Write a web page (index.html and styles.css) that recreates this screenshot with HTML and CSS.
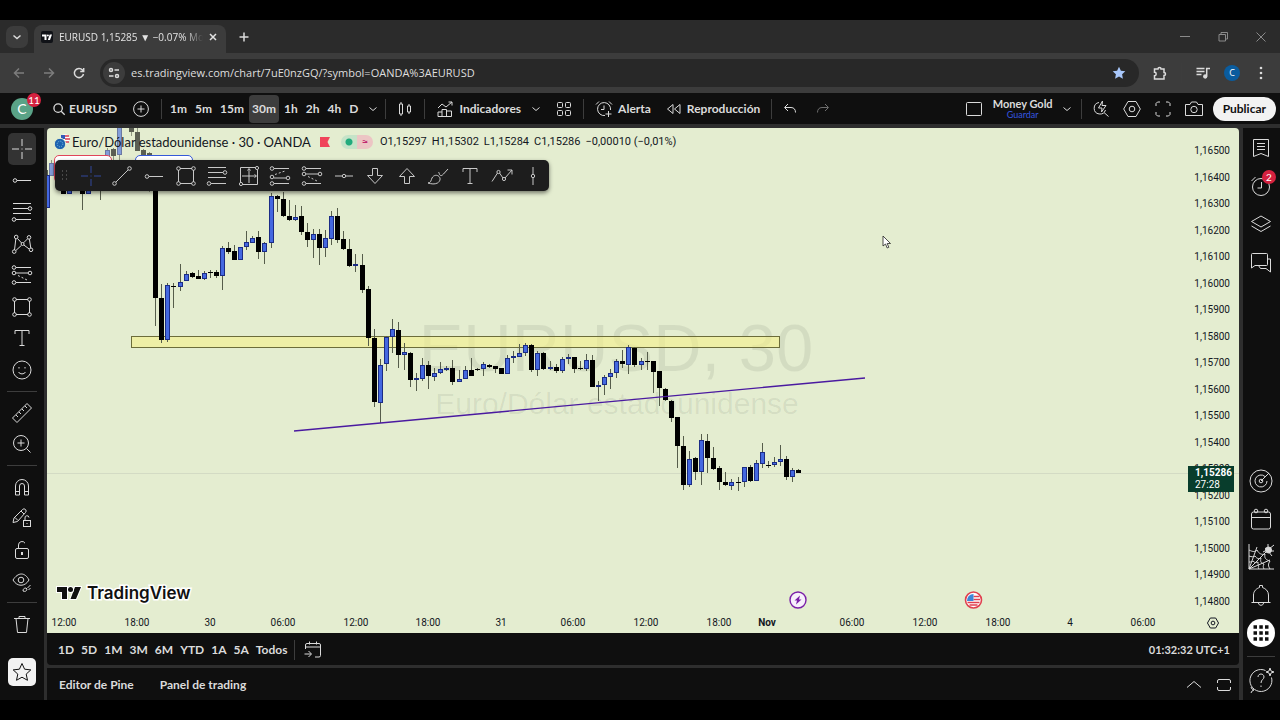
FILE: index.html
```html
<!DOCTYPE html>
<html lang="es">
<head>
  <meta charset="UTF-8">
  <meta name="viewport" content="width=device-width, initial-scale=1.0">
  <title>EURUSD 1,15285 ▼ −0.07% Money Gold</title>
  <link rel="stylesheet" href="styles.css">
</head>
<body>

<svg class="sprite" aria-hidden="true">
  <symbol id="i-cross" viewBox="0 0 24 24"><path d="M12 2v7M12 15v7M2 12h7M15 12h7M11.5 12h1"/></symbol>
  <symbol id="i-trend" viewBox="0 0 24 24"><circle cx="4.5" cy="19.5" r="1.8"/><circle cx="19.5" cy="4.5" r="1.8"/><path d="M5.8 18.2 18.2 5.8"/></symbol>
  <symbol id="i-ray" viewBox="0 0 24 24"><circle cx="5" cy="12.5" r="1.8"/><path d="M7 12.5h14"/></symbol>
  <symbol id="i-fib" viewBox="0 0 24 24"><path d="M3 3.5h18M3 8.5h15M3 13.5h18M6 19.5h15"/><circle cx="20" cy="8.5" r="1.8"/><circle cx="4" cy="19.5" r="1.8"/></symbol>
  <symbol id="i-pattern" viewBox="0 0 24 24"><path d="m4.5 18 1.3-11M7.6 6.6l4 4.4M13.6 10.8l4-4M19.4 7.2l1.4 9M6 18.4l5.4-5M13.8 13l5.4 4"/><circle cx="4.2" cy="19.6" r="1.8"/><circle cx="6.2" cy="5" r="1.8"/><circle cx="12.6" cy="12" r="1.5"/><circle cx="19" cy="5.4" r="1.8"/><circle cx="21" cy="17.8" r="1.8"/></symbol>
  <symbol id="i-forecast" viewBox="0 0 24 24"><path d="M6 4.5h15M6 19.5h15M6 14h12"/><path d="M7 10.5l10-3.5" stroke-dasharray="2 2"/><circle cx="4" cy="4.5" r="1.8"/><circle cx="4" cy="13" r="1.8"/><circle cx="4" cy="19.5" r="1.8"/><circle cx="20" cy="14" r="1.8"/></symbol>
  <symbol id="i-position" viewBox="0 0 24 24"><path d="M6 4.5h15M6 10h12M6 19.5h15"/><path d="M8 12.5l10 5" stroke-dasharray="2 2"/><circle cx="4" cy="4.5" r="1.8"/><circle cx="4" cy="10" r="1.8"/><circle cx="4" cy="19.5" r="1.8"/><circle cx="20" cy="10" r="1.8"/></symbol>
  <symbol id="i-rect" viewBox="0 0 24 24"><path d="M6 4.5h12M6 19.5h12M4.5 6v12M19.5 6v12"/><circle cx="4.5" cy="4.5" r="1.8"/><circle cx="19.5" cy="4.5" r="1.8"/><circle cx="4.5" cy="19.5" r="1.8"/><circle cx="19.5" cy="19.5" r="1.8"/></symbol>
  <symbol id="i-range" viewBox="0 0 24 24"><path d="M18 3.500H3.500v15M5.500 20.500h15V6M12 5v14M5 12h14M10.500 6.500l1.500-2 1.500 2M17.500 10.500l2 1.500-2 1.500"/><circle cx="20" cy="4" r="1.600"/><circle cx="4" cy="20" r="1.600"/></symbol>
  <symbol id="i-text" viewBox="0 0 24 24"><path d="M5 8V4.500h14V8M12 4.500v15M9.500 19.500h5"/></symbol>
  <symbol id="i-smile" viewBox="0 0 24 24"><circle cx="12" cy="12" r="9"/><path d="M8.500 14c1.500 2.500 5.500 2.500 7 0M9 9v1.500M15 9v1.500"/></symbol>
  <symbol id="i-ruler" viewBox="0 0 24 24"><path d="M2.500 17 17 2.500l4.500 4.500L7 21.500zM6 14l2 2M9 11l2 2M12 8l2 2M15 5l2 2"/></symbol>
  <symbol id="i-zoom" viewBox="0 0 24 24"><circle cx="11" cy="11" r="7.500"/><path d="m16.500 16.500 4 4M11 7.500v7M7.500 11h7"/></symbol>
  <symbol id="i-magnet" viewBox="0 0 24 24"><path d="M5.500 20V11a6.500 6.500 0 0 1 13 0v9h-4v-9a2.500 2.500 0 0 0-5 0v9zM5.500 16.500h4M14.500 16.500h4"/></symbol>
  <symbol id="i-penlock" viewBox="0 0 24 24"><path d="M3 16.500 4 12l8.500-8.500a2 2 0 0 1 3 3L7.500 15.500zM11 5l3 3M5 11.500l3 3"/><rect x="13.500" y="14.500" width="7" height="6"/><path d="M15 14.500V12a2 2 0 0 1 4-.5M17 17v1"/></symbol>
  <symbol id="i-lock" viewBox="0 0 24 24"><rect x="5.500" y="10.500" width="13" height="10" rx="1.500"/><path d="M8.500 10.500V7a3.500 3.500 0 0 1 6.500-1.800"/><path d="M12 14v3" stroke-width="2"/></symbol>
  <symbol id="i-eye" viewBox="0 0 24 24"><path d="M3 10c5-8 12-8 16 0-4 7-12 7-16 0z"/><circle cx="11" cy="10" r="2.800"/><path d="M13 21c0-2 1-3 3-3l1 1c0 2-2 3-4 2zM17.500 18l3-3M18.500 19.500l2-1"/></symbol>
  <symbol id="i-trash" viewBox="0 0 24 24"><path d="M4 6.500h16M9 6V4.500h6V6M6 6.500l1.500 14h9L18 6.500"/></symbol>
  <symbol id="i-star" viewBox="0 0 24 24"><path d="m12 3.500 2.600 5.700 6.200.700-4.600 4.200 1.300 6.200-5.500-3.100-5.500 3.100 1.300-6.200-4.600-4.200 6.200-.700z"/></symbol>
  <symbol id="i-hline" viewBox="0 0 24 24"><path d="M3 12h7M14 12h7"/><circle cx="12" cy="12" r="1.700"/></symbol>
  <symbol id="i-down" viewBox="0 0 24 24"><path d="M9.500 4.500h5v7h5L12 19.500 4.500 11.500h5z"/></symbol>
  <symbol id="i-up" viewBox="0 0 24 24"><path d="M9.500 19.500h5v-7h5L12 4.500 4.500 12.500h5z"/></symbol>
  <symbol id="i-brush" viewBox="0 0 24 24"><path d="M2 19c3 0 3-3 4-5 1.500-3 5-3.500 7-1.500s1 5-1.500 6.500c-3 1.500-6 1-9.500 0zM12.500 8c1 1 .5 2.500 2 3.500 1 .5 2-.5 3-1.500L22 5"/></symbol>
  <symbol id="i-zigzag" viewBox="0 0 24 24"><path d="M2 17.500 7.500 9M9.500 9l3.500 5M15 14l7-8M17.500 6H22v4.500"/><circle cx="8.500" cy="8" r="1.600"/><circle cx="14" cy="15" r="1.600"/></symbol>
  <symbol id="i-vline" viewBox="0 0 24 24"><path d="M12 3v7M12 14v7"/><circle cx="12" cy="12" r="1.700"/></symbol>
  <symbol id="i-search" viewBox="0 0 16 16"><circle cx="7" cy="7" r="4.800"/><path d="m10.500 10.500 4 4"/></symbol>
  <symbol id="i-plus" viewBox="0 0 16 16"><circle cx="8" cy="8" r="7.400"/><path d="M8 4.500v7M4.500 8h7"/></symbol>
  <symbol id="i-chev" viewBox="0 0 8 8"><path d="m.5 2.500 3.500 3 3.500-3"/></symbol>
  <symbol id="i-candles" viewBox="0 0 16 16"><path d="M2.500 3h3v10h-3zM4 1v2M4 13v2M10.500 5h3v6h-3zM12 3v2M12 11v2"/></symbol>
  <symbol id="i-indicators" viewBox="0 0 18 18"><path d="M2 8l4-4 4 3 6-5M12.500 2H16v3.500M2 16.500V12h4v4.500M6 12V9.500h4.500v7M10.500 11h5v5.500H2"/></symbol>
  <symbol id="i-grid" viewBox="0 0 16 16"><rect x="1.500" y="1.500" width="5" height="5" rx="1"/><rect x="9.500" y="1.500" width="5" height="5" rx="1"/><rect x="1.500" y="9.500" width="5" height="5" rx="1"/><rect x="9.500" y="9.500" width="5" height="5" rx="1"/></symbol>
  <symbol id="i-alarm" viewBox="0 0 18 18"><path d="M15.500 10A6.500 6.500 0 1 0 10 15.500M9 5.500v4H6M1 4.500 4 1.500M14 1.500l3 3M13.500 11v6M10.500 14h6"/></symbol>
  <symbol id="i-rewind" viewBox="0 0 16 16"><path d="M7 3.500v9L1.500 8zM14 3.500v9L8.500 8z"/></symbol>
  <symbol id="i-undo" viewBox="0 0 14 14"><path d="M5 2 1.500 5.500 5 9M2 5.500h6c3 0 4.500 2 4.500 5"/></symbol>
  <symbol id="i-redo" viewBox="0 0 14 14"><path d="M9 2l3.500 3.500L9 9M12 5.500H6c-3 0-4.500 2-4.500 5"/></symbol>
  <symbol id="i-square" viewBox="0 0 18 18"><rect x="1.500" y="2.500" width="15" height="13" rx="1"/></symbol>
  <symbol id="i-quick" viewBox="0 0 18 18"><path d="M7 2.500A5.800 5.800 0 1 0 13.500 10M12 12.500l4.500 4M10.500 1 6.500 8h3.500l-.5 4L14 5.500h-4z"/></symbol>
  <symbol id="i-hex" viewBox="0 0 18 18"><path d="M5 1.500h8L17.300 9 13 16.500H5L.7 9z"/><circle cx="9" cy="9" r="2.800"/></symbol>
  <symbol id="i-full" viewBox="0 0 18 18"><path d="M2 6V3.500L3.500 2H6M12 2h2.500L16 3.500V6M16 12v2.500L14.500 16H12M6 16H3.500L2 14.500V12"/></symbol>
  <symbol id="i-maximize" viewBox="0 0 16 16"><path d="M1.500 6V4A1.500 1.500 0 0 1 3 2.500h10A1.500 1.500 0 0 1 14.500 4v2M14.500 10v2a1.500 1.500 0 0 1-1.500 1.500H3A1.500 1.500 0 0 1 1.500 12v-2"/></symbol>
  <symbol id="i-camera" viewBox="0 0 18 18"><path d="M.5 4.500H5l1.500-2.500h5L13 4.500h4.500v11H.5z"/><circle cx="9" cy="9.500" r="3.200"/></symbol>
  <symbol id="i-list" viewBox="0 0 24 24"><path d="M4.500 3.500h15v17L12 17.500l-7.500 3zM8 7.500h8M8 10.500h8M8 13.500h8"/></symbol>
  <symbol id="i-clock" viewBox="0 0 24 24"><circle cx="12" cy="13" r="8.500"/><path d="M12.500 8v6H8.500M2.500 7l4-4"/></symbol>
  <symbol id="i-layers" viewBox="0 0 24 24"><path d="m12 4 9.500 5.500L12 15 2.500 9.500zM2.500 14l9.500 5.500 9.500-5.500"/></symbol>
  <symbol id="i-chat" viewBox="0 0 24 24"><path d="M3.500 3.500h14a1 1 0 0 1 1 1v10a1 1 0 0 1-1 1H6L2.500 18V4.500a1 1 0 0 1 1-1zM18.500 9h3v13L17 18.500h-5.500l-2-3"/></symbol>
  <symbol id="i-radar" viewBox="0 0 24 24"><circle cx="12" cy="12" r="11"/><path d="M16 7.500A6 6 0 1 0 18 12M12 12l8-8"/><circle cx="12" cy="12" r="1.800"/></symbol>
  <symbol id="i-cal" viewBox="0 0 24 24"><rect x="2.500" y="5" width="19" height="17" rx="2"/><path d="M2.500 10.500h19"/><circle cx="7" cy="4" r="1.800"/><circle cx="17" cy="4" r="1.800"/></symbol>
  <symbol id="i-web" viewBox="0 0 26 26"><path d="M1 0v25h25M1 25 20 6M1 25 9 3M1 25l21-9M1 6c4 2 6 2 8 0 2 4 5 5 8 4-1 4 1 6 5 7-2 3-2 5 0 8M1 12c3 1 4 1 6 0 2 3 4 3 6 2-1 4 0 5 3 6-1 2-1 3 0 5M1 18c2 0 3 0 4-1 2 2 3 2 5 1 0 2 0 3 1 4-1 1-1 2 0 3"/><path d="M17 4l3 2M20 0v5M26 1l-5 4M27 7h-6M24 12l-4-5M15 8l4-2"/><circle cx="20.500" cy="6" r="3" fill="currentColor"/></symbol>
  <symbol id="i-bell" viewBox="0 0 24 24"><path d="M2.500 19.500h19M4.500 19.500V12c0-4 3-6.500 6-7.500v-2h3v2c3 1 6 3.500 6 7.500v7.500M9.500 20c0 3 5 3 5 0"/></symbol>
  <symbol id="i-help" viewBox="0 0 26 26"><path d="M23.500 10.500A11 11 0 1 1 17.500 3.500M10 10c0-4 6-4 6 0 0 2.500-3 2.500-3 6M13 18.500v1.500M22 1l1 3 3 1-3 1-1 3-1-3-3-1 3-1zM3 20l1 2 2 1-2 1-1 2"/></symbol>
  <symbol id="i-goto" viewBox="0 0 18 18"><path d="M1.500 8V4a1.500 1.500 0 0 1 1.500-1.500h12A1.500 1.500 0 0 1 16.500 4v10.500A1.500 1.500 0 0 1 15 16h-4M1.500 6h15M5.500.500v3M12.500.500v3M.500 13H7M4.500 10l3 3-3 3"/></symbol>
  <symbol id="i-collapse" viewBox="0 0 16 16"><path d="m1 10.500 7-6 7 6"/></symbol>
</svg>

<div class="browser">
  <header class="chrome">
    <div class="tabs">
      <button class="tab-search" aria-label="Buscar pestañas"><svg class="ico s8 bold"><use href="#i-chev"/></svg></button>
      <div class="tab">
        <svg class="favicon" viewBox="0 0 12 12"><rect width="12" height="12" rx="2" fill="#101217"/><path d="M1 3.500h4.500V9H3.500V5.500H1zM8.700 3.500H11L9 9H6.800z" fill="#fff"/><circle cx="6.900" cy="4.500" r="1" fill="#fff"/></svg>
        <span class="tab-title">EURUSD 1,15285 ▼ −0.07% Mo</span>
        <button class="tab-close" aria-label="Cerrar pestaña"><svg class="ico s8 bold" viewBox="0 0 8 8"><path d="m1 1 6 6M7 1 1 7"/></svg></button>
      </div>
      <button class="tab-new" aria-label="Nueva pestaña"><svg class="ico s10 bold" viewBox="0 0 10 10"><path d="M5 .5v9M.5 5h9"/></svg></button>
      <div class="window-buttons">
        <button aria-label="Minimizar"><svg class="ico s10" viewBox="0 0 10 10"><path d="M0 4.500h10"/></svg></button>
        <button aria-label="Restaurar"><svg class="ico s10" viewBox="0 0 10 10"><path d="M1 2.500h6.500V9H1zM3 2.500v-2h6.500V7h-2"/></svg></button>
        <button aria-label="Cerrar"><svg class="ico s10" viewBox="0 0 10 10"><path d="m.5.5 9 9M9.500.500l-9 9"/></svg></button>
      </div>
    </div>
    <div class="address">
      <button class="nav dim" aria-label="Atrás"><svg class="ico s12 bold" viewBox="0 0 12 12"><path d="M11 6H1.500M6 1.500 1.500 6 6 10.500"/></svg></button>
      <button class="nav dim" aria-label="Adelante"><svg class="ico s12 bold" viewBox="0 0 12 12"><path d="M1 6h9.500M6 1.500 10.500 6 6 10.500"/></svg></button>
      <button class="nav" aria-label="Recargar"><svg class="ico s12 bold" viewBox="0 0 12 12"><path d="M10.500 7A4.600 4.600 0 1 1 9.500 3l1 1.200M10.700 1v3.500H7.200"/></svg></button>
      <div class="omnibox">
        <span class="site-info"><svg class="ico s12 bold" viewBox="0 0 12 12"><circle cx="3" cy="3" r="1.500"/><path d="M6.500 3H11M1 9h4.500"/><circle cx="9" cy="9" r="1.500"/></svg></span>
        <input class="url" type="text" aria-label="Dirección" value="es.tradingview.com/chart/7uE0nzGQ/?symbol=OANDA%3AEURUSD">
        <svg class="bookmark" viewBox="0 0 14 14"><path d="m7 .8 1.900 4 4.400.500-3.200 3 .8 4.400L7 10.500l-3.900 2.200.8-4.400-3.200-3 4.400-.500z"/></svg>
      </div>
      <button class="nav ext" aria-label="Extensiones"><svg class="ico s14 bold" viewBox="0 0 14 14"><path d="M1.500 3H5a1.500 1.500 0 0 1 3 0h3v3.500a1.500 1.500 0 0 1 0 3V13H1.500V9.700a1.700 1.700 0 0 0 0-3.400z"/></svg></button>
      <i class="line"></i>
      <button class="nav" aria-label="Control multimedia"><svg class="ico s14 bold" viewBox="0 0 14 14"><path d="M.500 2.500h8M.500 5.500h8M.500 8.500h5M10.700 10.500V2.500H14"/><circle cx="9.200" cy="10.500" r="1.400" fill="currentColor"/></svg></button>
      <button class="profile" aria-label="Perfil">C</button>
      <button class="nav" aria-label="Menú"><svg class="s14 dots" viewBox="0 0 14 14"><circle cx="7" cy="2" r="1.300"/><circle cx="7" cy="7" r="1.300"/><circle cx="7" cy="12" r="1.300"/></svg></button>
    </div>
  </header>

  <nav class="toolbar">
    <button class="avatar">C<span class="badge">11</span></button>
    <button class="symbol"><svg class="ico s14 bold"><use href="#i-search"/></svg>EURUSD</button>
    <button class="add" aria-label="Comparar"><svg class="ico s16"><use href="#i-plus"/></svg></button>
    <i class="line"></i>
    <div class="intervals">
      <button>1m</button><button>5m</button><button>15m</button><button class="active">30m</button><button>1h</button><button>2h</button><button>4h</button><button>D</button>
    </div>
    <button class="more" aria-label="Más intervalos"><svg class="ico s8"><use href="#i-chev"/></svg></button>
    <i class="line"></i>
    <button class="pad" aria-label="Velas"><svg class="ico s16"><use href="#i-candles"/></svg></button>
    <i class="line"></i>
    <button class="pad"><svg class="ico s18"><use href="#i-indicators"/></svg>Indicadores</button>
    <button class="more" aria-label="Favoritos"><svg class="ico s8"><use href="#i-chev"/></svg></button>
    <button class="pad templates" aria-label="Plantillas"><svg class="ico s16"><use href="#i-grid"/></svg></button>
    <i class="line"></i>
    <button class="pad"><svg class="ico s18"><use href="#i-alarm"/></svg>Alerta</button>
    <button class="pad replay"><svg class="ico s16"><use href="#i-rewind"/></svg>Reproducción</button>
    <i class="line"></i>
    <button class="pad" aria-label="Deshacer"><svg class="ico s14"><use href="#i-undo"/></svg></button>
    <button class="redo" aria-label="Rehacer"><svg class="ico s14"><use href="#i-redo"/></svg></button>

    <div class="right">
      <button aria-label="Diseño"><svg class="ico s18"><use href="#i-square"/></svg></button>
      <button class="layout-name">Money Gold<small>Guardar</small></button>
      <button aria-label="Diseños"><svg class="ico s8"><use href="#i-chev"/></svg></button>
      <i class="line"></i>
      <div class="actions">
        <button aria-label="Búsqueda rápida"><svg class="ico s18"><use href="#i-quick"/></svg></button>
        <button aria-label="Configuración"><svg class="ico s18"><use href="#i-hex"/></svg></button>
        <button aria-label="Pantalla completa"><svg class="ico s18"><use href="#i-full"/></svg></button>
        <button aria-label="Captura"><svg class="ico s18"><use href="#i-camera"/></svg></button>
      </div>
      <button class="publish">Publicar</button>
    </div>
  </nav>

  <div class="workspace">
    <aside class="rail">
      <button class="active" aria-label="Cruz"><svg class="ico s24"><use href="#i-cross"/></svg></button>
      <button aria-label="Línea"><svg class="ico s24"><use href="#i-ray"/></svg></button>
      <button aria-label="Fibonacci"><svg class="ico s24"><use href="#i-fib"/></svg></button>
      <button aria-label="Patrones"><svg class="ico s24"><use href="#i-pattern"/></svg></button>
      <button aria-label="Previsión"><svg class="ico s24"><use href="#i-position"/></svg></button>
      <button aria-label="Formas"><svg class="ico s24"><use href="#i-rect"/></svg></button>
      <button aria-label="Texto"><svg class="ico s24"><use href="#i-text"/></svg></button>
      <button aria-label="Iconos"><svg class="ico s24"><use href="#i-smile"/></svg></button>
      <hr>
      <button aria-label="Medir"><svg class="ico s24"><use href="#i-ruler"/></svg></button>
      <button aria-label="Acercar"><svg class="ico s24"><use href="#i-zoom"/></svg></button>
      <hr>
      <button aria-label="Imán"><svg class="ico s24"><use href="#i-magnet"/></svg></button>
      <button aria-label="Modo dibujo"><svg class="ico s24"><use href="#i-penlock"/></svg></button>
      <button aria-label="Bloquear"><svg class="ico s24"><use href="#i-lock"/></svg></button>
      <button aria-label="Ocultar"><svg class="ico s24"><use href="#i-eye"/></svg></button>
      <hr>
      <button aria-label="Eliminar"><svg class="ico s24"><use href="#i-trash"/></svg></button>
      <button class="favorite" aria-label="Favoritos"><svg class="ico s24"><use href="#i-star"/></svg></button>
    </aside>

    <main class="center">
      <section class="chart">
        <svg class="plot" id="plot"></svg>

        <div class="legend">
          <div class="legend-row">
            <svg class="pair" viewBox="0 0 16 16"><circle cx="11" cy="5" r="4.800" fill="#fff"/><path d="M11 2h4M11 5h5M11 8h4" stroke="#d63a52" stroke-width="1.500"/><path d="M7 1h4v4H7z" fill="#3258b8"/><circle cx="6" cy="10" r="5.700" fill="#1d62b0" stroke="#e4edd0"/><circle cx="6" cy="10" r="2.800" fill="none" stroke="#7ec0dc" stroke-dasharray="1 1.200"/></svg>
            <h1>Euro/Dólar estadounidense · 30 · OANDA</h1>
            <svg class="flag" viewBox="0 0 10 10"><path d="M0 0h10L7.500 5l2.500 5H0z" fill="#f0445a"/></svg>
            <span class="status"><b></b><em>≈</em></span>
            <span class="ohlc"><span>O1,15297</span><span>H1,15302</span><span>L1,15284</span><span>C1,15286</span><span>−0,00010 (−0,01%)</span></span>
          </div>
          <div class="quotes">
            <button class="sell">1,15285</button>
            <button class="buy">1,15289</button>
          </div>
        </div>

        <div class="favbar">
          <svg class="grip" viewBox="0 0 8 12"><path d="M1 1h1M5 1h1M1 5h1M5 5h1M1 9h1M5 9h1" stroke="#5a5a5a" stroke-width="1.500"/></svg>
          <button class="on" aria-label="Cruz"><svg class="ico s24"><use href="#i-cross"/></svg></button>
          <button aria-label="Línea de tendencia"><svg class="ico s24"><use href="#i-trend"/></svg></button>
          <button aria-label="Rayo horizontal"><svg class="ico s24"><use href="#i-ray"/></svg></button>
          <button aria-label="Rectángulo"><svg class="ico s24"><use href="#i-rect"/></svg></button>
          <button aria-label="Fibonacci"><svg class="ico s24"><use href="#i-fib"/></svg></button>
          <button aria-label="Rango"><svg class="ico s24"><use href="#i-range"/></svg></button>
          <button aria-label="Posición larga"><svg class="ico s24"><use href="#i-forecast"/></svg></button>
          <button aria-label="Posición corta"><svg class="ico s24"><use href="#i-position"/></svg></button>
          <button aria-label="Línea horizontal"><svg class="ico s24"><use href="#i-hline"/></svg></button>
          <button aria-label="Flecha abajo"><svg class="ico s24"><use href="#i-down"/></svg></button>
          <button aria-label="Flecha arriba"><svg class="ico s24"><use href="#i-up"/></svg></button>
          <button aria-label="Pincel"><svg class="ico s24"><use href="#i-brush"/></svg></button>
          <button aria-label="Texto"><svg class="ico s24"><use href="#i-text"/></svg></button>
          <button aria-label="Trayectoria"><svg class="ico s24"><use href="#i-zigzag"/></svg></button>
          <button aria-label="Línea vertical"><svg class="ico s24"><use href="#i-vline"/></svg></button>
        </div>

        <div class="price-tag"><strong>1,15286</strong><span>27:28</span></div>

        <a class="brand" href="#">
          <svg viewBox="0 0 26 14"><path d="M1 1h10v12H6V6H1zM19 1h6l-5 12h-5.500z"/><circle cx="14.500" cy="3.500" r="2.500"/></svg>
          TradingView
        </a>
        <button class="axis-settings" aria-label="Ajustes de escala"><svg class="ico s12 bold" viewBox="0 0 18 18"><use href="#i-hex"/></svg></button>
        <svg class="cursor" viewBox="0 0 10 14"><path d="M1 1v10l2.500-2 1.700 4 1.600-.700L5.200 8.500h3.300z" fill="#fff" stroke="#222" stroke-width=".8"/></svg>
      </section>

      <div class="ranges">
        <button>1D</button><button>5D</button><button>1M</button><button>3M</button><button>6M</button><button>YTD</button><button>1A</button><button>5A</button><button>Todos</button>
        <i class="line"></i>
        <button class="goto" aria-label="Ir a fecha"><svg class="ico s18"><use href="#i-goto"/></svg></button>
        <time>01:32:32 UTC+1</time>
      </div>

      <footer class="panels">
        <button>Editor de Pine</button>
        <button>Panel de trading</button>
        <div class="panel-tools">
          <button aria-label="Abrir panel"><svg class="ico s16"><use href="#i-collapse"/></svg></button>
          <button aria-label="Maximizar panel"><svg class="ico s16"><use href="#i-maximize"/></svg></button>
        </div>
      </footer>
    </main>

    <aside class="widgets">
      <button aria-label="Lista"><svg class="ico s24"><use href="#i-list"/></svg></button>
      <button aria-label="Alertas"><svg class="ico s24"><use href="#i-clock"/></svg><span class="badge">2</span></button>
      <button aria-label="Objetos"><svg class="ico s24"><use href="#i-layers"/></svg></button>
      <button aria-label="Chats"><svg class="ico s24"><use href="#i-chat"/></svg></button>
      <button class="push" aria-label="Screeners"><svg class="ico s24"><use href="#i-radar"/></svg></button>
      <button aria-label="Calendario"><svg class="ico s24"><use href="#i-cal"/></svg></button>
      <button aria-label="Halloween"><svg class="ico s26"><use href="#i-web"/></svg></button>
      <button aria-label="Notificaciones"><svg class="ico s24"><use href="#i-bell"/></svg></button>
      <button aria-label="Productos"><svg class="apps" viewBox="0 0 28 28"><circle cx="14" cy="14" r="14" fill="#fff"/><path d="M6.500 8h3.500M12.300 8h3.500M18 8h3.500M6.500 14h3.500M12.300 14h3.500M18 14h3.500M6.500 20h3.500M12.300 20h3.500M18 20h3.500" stroke="#0f0f0f" stroke-width="3.500"/></svg></button>
      <hr>
      <button aria-label="Ayuda"><svg class="ico s26"><use href="#i-help"/></svg></button>
    </aside>
  </div>
</div>

<script src="chart.js"></script>
</body>
</html>
```

FILE: styles.css
```css
* {
  box-sizing: border-box;
}
body {
  margin: 0;
  background: #000;
  color: #dbdbdb;
  font-family: Lato, "Liberation Sans", sans-serif;
  font-size: 12px;
  line-height: 16px;
}
button {
  display: flex;
  align-items: center;
  justify-content: center;
  margin: 0;
  padding: 0;
  border: none;
  background: none;
  color: inherit;
  font: inherit;
  white-space: nowrap;
  cursor: pointer;
}
.sprite {
  position: absolute;
  width: 0;
  height: 0;
}
.ico {
  display: block;
  flex: none;
  fill: none;
  stroke: currentColor;
  stroke-width: 1;
}
.bold { stroke-width: 1.5; }
.s8 { width: 8px; height: 8px; }
.s10 { width: 10px; height: 10px; }
.s12 { width: 12px; height: 12px; }
.s14 { width: 14px; height: 14px; }
.s16 { width: 16px; height: 16px; }
.s18 { width: 18px; height: 18px; }
.s24 { width: 24px; height: 24px; }
.s26 { width: 26px; height: 26px; }
.line {
  flex: none;
  width: 1px;
  height: 20px;
  background: #3d3d3d;
}
.badge {
  position: absolute;
  top: -5px;
  right: -8px;
  min-width: 14px;
  height: 14px;
  border-radius: 7px;
  background: #d4213f;
  color: #fff;
  font-size: 10px;
  line-height: 14px;
  text-align: center;
}

.browser {
  display: flex;
  flex-direction: column;
  height: 100vh;
  min-height: 700px;
  padding: 20px 0;
}

/* browser window */
.chrome {
  background: #3c3c3c;
  font-family: "Open Sans", "Noto Sans", sans-serif;
}
.tabs {
  display: flex;
  align-items: center;
  height: 33px;
  padding-left: 6px;
  background: #2b2b2b;
}
.tab-search {
  width: 22px;
  height: 22px;
  border-radius: 7px;
  background: #3c3c3c;
}
.tab {
  display: flex;
  align-items: center;
  gap: 6px;
  align-self: flex-end;
  width: 192px;
  height: 28px;
  margin-left: 6px;
  padding: 0 9px 4px 7px;
  border-radius: 8px 8px 0 0;
  background: #3c3c3c;
  color: #e3e3e3;
}
.favicon {
  flex: none;
  width: 12px;
  height: 12px;
}
.tab-title {
  flex: 1;
  overflow: hidden;
  font-size: 10px;
  white-space: nowrap;
  -webkit-mask-image: linear-gradient(to right, #000 88%, transparent);
  mask-image: linear-gradient(to right, #000 88%, transparent);
}
.tab-new {
  margin-left: 13px;
}
.window-buttons {
  display: flex;
  gap: 28px;
  margin-left: auto;
  padding-right: 14px;
  color: #8a8a8a;
}
.address {
  display: flex;
  align-items: center;
  gap: 12px;
  height: 40px;
  padding: 0 10px;
}
.nav {
  width: 18px;
  height: 24px;
}
.nav.dim {
  color: #7d7d7d;
}
.omnibox {
  display: flex;
  align-items: center;
  flex: 1;
  height: 28px;
  padding: 0 13px 0 3px;
  border-radius: 14px;
  background: #282828;
}
.site-info {
  display: flex;
  align-items: center;
  justify-content: center;
  width: 22px;
  height: 22px;
  border-radius: 50%;
  background: #3c3c3c;
}
.url {
  flex: 1;
  min-width: 0;
  padding: 0 6px;
  border: none;
  outline: none;
  background: none;
  color: #dedede;
  font: inherit;
  font-size: 11px;
}
.bookmark {
  width: 14px;
  height: 14px;
  fill: #a8c7fa;
}
.dots {
  fill: #dbdbdb;
}
.profile {
  width: 16px;
  height: 16px;
  border-radius: 50%;
  background: #0a5c9e;
  color: #fff;
  font-size: 9px;
}

/* top toolbar */
.toolbar {
  display: flex;
  align-items: center;
  flex: none;
  height: 31px;
  padding: 0 4px 0 11px;
  background: #0f0f0f;
  font-weight: bold;
}
.toolbar button {
  gap: 5px;
  height: 28px;
}
.toolbar .avatar {
  position: relative;
  width: 22px;
  height: 22px;
  border-radius: 50%;
  background: #5aa387;
  color: #fff;
  font-size: 14px;
  font-weight: normal;
}
.symbol {
  margin: 0 16px 0 19px;
}
.toolbar .symbol {
  gap: 3px;
}
.add {
  margin-right: 12px;
}
.intervals {
  display: flex;
  gap: 2px;
  margin: 0 8px 0 5px;
}
.intervals button {
  padding: 0 3px;
  border-radius: 4px;
}
.intervals .active {
  background: #3d3d3d;
}
.more {
  margin-right: 8px;
}
.pad {
  padding: 0 11px;
}
.templates {
  padding-left: 8px;
}
.replay {
  padding-left: 4px;
}
.redo {
  margin-left: 8px;
  color: #6e6e6e;
}
.right {
  display: flex;
  align-items: center;
  gap: 10px;
  margin-left: auto;
}
.toolbar .layout-name {
  flex-direction: column;
  gap: 0;
  font-size: 11px;
  line-height: 12px;
}
.layout-name small {
  color: #3556e0;
  font-size: 9px;
  font-weight: normal;
  line-height: 9px;
}
.actions {
  display: flex;
  gap: 13px;
}
.publish {
  padding: 0 10px;
  border-radius: 12px;
  background: #f2f2f2;
  color: #0f0f0f;
}
.toolbar .publish {
  height: 24px;
}

/* workspace */
.workspace {
  display: flex;
  gap: 3px;
  flex: 1;
  min-height: 0;
  padding-top: 4px;
  background: #2e2e2e;
}
.rail,
.widgets {
  display: flex;
  flex-direction: column;
  align-items: center;
  flex: none;
  background: #0f0f0f;
}
.rail {
  width: 44px;
  padding: 5px 0 14px;
}
.rail button {
  flex: 1;
  width: 28px;
  border-radius: 5px;
}
.rail .active {
  background: #333;
}
.rail .favorite {
  flex: none;
  height: 28px;
  margin-top: 18px;
  background: #f2f2f2;
  color: #0f0f0f;
}
.rail hr {
  width: 30px;
  height: 1px;
  margin: 5px 0;
  border: none;
  background: #3d3d3d;
}
.widgets {
  width: 37px;
  margin-left: 1px;
  padding: 1px 1px 1px 0;
}
.widgets button {
  position: relative;
  width: 28px;
  height: 38px;
}
.widgets .push {
  margin-top: auto;
}
.widgets .badge {
  top: 3px;
  right: -1px;
}
.widgets hr {
  width: 28px;
  height: 1px;
  margin: 4px 0;
  border: none;
  background: #3d3d3d;
}
.apps {
  width: 28px;
  height: 28px;
}
.center {
  display: flex;
  flex-direction: column;
  flex: 1;
  min-width: 0;
}

/* chart */
.chart {
  position: relative;
  flex: 1;
  overflow: hidden;
  border-radius: 4px 4px 0 0;
  background: #e4edd0;
  color: #131722;
}
.plot {
  display: block;
  width: 100%;
  height: 100%;
}
.watermark {
  fill: #000;
  fill-opacity: .07;
  font-family: "Liberation Sans", sans-serif;
  text-anchor: middle;
}
.watermark.big { font-size: 67px; }
.watermark.small { font-size: 30px; }
.axis {
  fill: #131722;
  font-family: Roboto, sans-serif;
  font-size: 10px;
}
.axis.time { text-anchor: middle; }
.axis.price { text-anchor: end; }
.axis.strong { font-weight: bold; }
.legend {
  position: absolute;
  top: 4px;
  left: 7px;
}
.legend-row {
  display: flex;
  align-items: center;
  height: 20px;
}
.pair {
  width: 16px;
  height: 16px;
  margin-right: 2px;
}
h1 {
  margin: 0;
  font-size: 13px;
  font-weight: normal;
  line-height: 20px;
  white-space: nowrap;
}
.flag {
  width: 10px;
  height: 10px;
  margin: 0 11px 0 9px;
}
.status {
  display: flex;
  overflow: hidden;
  height: 14px;
  border-radius: 7px;
  line-height: 14px;
}
.status b {
  width: 16px;
  background: radial-gradient(circle at 8px 7px, #22ab7d 3px, #c5e3c8 4px);
}
.status em {
  width: 16px;
  background: #ecc5c4;
  color: #c02870;
  font-style: normal;
  text-align: center;
}
.ohlc {
  display: flex;
  gap: 5px;
  margin-left: 7px;
  font-family: Roboto, sans-serif;
  font-size: 11px;
}
.quotes {
  display: flex;
  gap: 23px;
  margin-top: 3px;
}
.quotes button {
  width: 58px;
  height: 28px;
  border: 1px solid;
  border-radius: 5px;
  background: #fff;
  font-size: 11px;
  align-items: flex-start;
}
.sell { color: #e0455a; }
.buy { color: #3558d8; }
.favbar {
  position: absolute;
  top: 32px;
  left: 8px;
  display: flex;
  align-items: center;
  width: 494px;
  height: 31px;
  border-radius: 5px;
  background: #1d1d1d;
  color: #c8c8c8;
  box-shadow: 0 2px 4px rgba(0, 0, 0, .5);
}
.favbar button {
  flex: 1;
}
.favbar .on {
  color: #33489c;
}
.grip {
  width: 8px;
  height: 12px;
  margin: 0 6px;
}
.price-tag {
  position: absolute;
  top: 338px;
  right: 5px;
  display: flex;
  flex-direction: column;
  width: 46px;
  height: 26px;
  padding: 1px 7px;
  background: #083d2c;
  color: #fff;
  font-family: Roboto, sans-serif;
  font-size: 10px;
  line-height: 12px;
}
.brand {
  position: absolute;
  bottom: 29px;
  left: 9px;
  display: flex;
  align-items: center;
  gap: 5px;
  color: #111;
  font-family: Inter, sans-serif;
  font-size: 17px;
  font-weight: 600;
  line-height: 22px;
  text-decoration: none;
  -webkit-text-stroke: 3px #fff;
  paint-order: stroke fill;
}
.brand svg {
  width: 26px;
  height: 14px;
  fill: #111;
  stroke: #fff;
  stroke-width: 2;
  paint-order: stroke fill;
}
.axis-settings {
  position: absolute;
  right: 20px;
  bottom: 4px;
}
.cursor {
  position: absolute;
  top: 107px;
  left: 835px;
  width: 10px;
  height: 14px;
}

/* bottom bars */
.ranges,
.panels {
  display: flex;
  align-items: center;
  flex: none;
  height: 32px;
  background: #0f0f0f;
  font-weight: bold;
}
.ranges {
  gap: 7px;
  padding: 2px 9px 0 11px;
  border-radius: 0 0 4px 4px;
}
.goto {
  margin-left: 2px;
}
.ranges time {
  margin-left: auto;
  font-size: 11px;
}
.panels {
  gap: 26px;
  margin-top: 3px;
  padding: 2px 7px 0 12px;
}
.panel-tools {
  display: flex;
  gap: 14px;
  margin-left: auto;
}
```

FILE: chart.js
```js
const NS = 'http://www.w3.org/2000/svg';
const plot = document.getElementById('plot');

function add(parent, tag, attrs, text) {
  const el = document.createElementNS(NS, tag);
  for (const key in attrs) el.setAttribute(key, attrs[key]);
  if (text) el.textContent = text;
  parent.appendChild(el);
  return el;
}

// [high, top, bottom, low, up]
const candles = [
  [165,165,298,326,0],[284,298,340,343,0],[283,285,340,342,1],[283,286,287,308,0],[264,282,287,291,1],
  [271,274,281,281,1],[272,273,277,278,0],[270,276,279,279,0],[271,273,279,280,1],[270,272,273,278,0],
  [270,272,276,278,0],[246,248,276,290,1],[242,248,252,254,0],[245,251,260,260,0],[247,247,260,260,1],
  [231,242,247,250,1],[236,238,243,243,1],[231,237,252,259,0],[242,243,252,264,1],[193,196,243,248,1],
  [195,196,199,212,0],[192,199,216,217,0],[200,216,220,221,0],[205,217,220,221,1],[206,216,232,235,0],
  [223,232,240,247,0],[229,234,240,258,1],[229,234,248,265,0],[230,238,248,257,1],[211,216,239,245,1],
  [208,216,240,243,0],[231,239,249,250,0],[239,249,266,267,0],[254,264,266,272,1],[254,265,290,293,0],
  [286,289,338,346,0],[329,338,402,407,0],[359,365,403,423,1],[336,337,364,371,1],[319,329,337,353,1],
  [322,330,355,368,0],[343,352,355,370,1],[352,353,380,387,0],[373,378,380,391,1],[358,365,379,381,1],
  [361,365,376,389,0],[368,373,377,381,1],[362,369,373,374,1],[366,368,370,371,1],[360,368,382,385,0],
  [370,379,382,382,1],[366,370,379,379,1],[358,370,376,376,0],[368,369,370,371,0],[362,364,369,376,1],
  [364,365,367,368,0],[366,366,369,373,0],[368,368,374,374,0],[355,358,374,374,1],[351,356,358,363,1],
  [344,353,357,357,1],[343,345,353,356,1],[344,345,370,372,0],[351,353,370,376,1],[352,353,369,370,0],
  [361,367,369,370,1],[364,367,371,373,0],[357,359,371,373,1],[354,357,359,364,1],[357,357,369,373,0],
  [361,368,369,370,0],[354,360,369,371,1],[355,360,387,387,0],[381,385,387,401,1],[375,377,385,395,1],
  [369,373,377,389,1],[359,361,373,378,1],[350,361,364,368,0],[345,347,365,374,1],[347,348,365,367,0],
  [358,361,365,370,1],[352,361,362,370,0],[361,361,372,393,0],[371,371,388,406,0],[388,389,400,401,0],
  [400,401,418,422,0],[417,417,446,468,0],[436,446,485,490,0],[451,459,485,487,1],[457,458,472,480,0],
  [434,440,472,485,1],[434,441,458,473,0],[447,458,469,470,0],[466,468,482,490,0],[472,482,485,486,0],
  [479,482,486,490,1],[477,482,483,491,0],[467,467,482,487,1],[465,467,481,482,0],[460,463,481,481,1],
  [443,452,464,468,1],[461,465,466,468,0],[457,462,465,467,1],[445,459,462,466,1],[456,459,477,480,0],
  [468,470,477,482,1],[469,470,473,473,0]
];

// session before the drop, partly behind the legend: [x, high, top, bottom, low, up]
const earlier = [
  [48,170,175,208,208,1],[52,160,163,176,176,1],[64,180,180,194,194,0],[70,180,180,194,194,1],
  [83,180,180,194,210,0],[89,180,180,194,194,1],[101,180,180,190,200,0],[108,148,150,158,158,1],
  [114,148,149,156,160,0],[120,120,120,155,160,1],[132,126,126,132,136,0],
  [138,128,132,151,151,0],[144,149,150,156,156,0],[150,152,153,190,192,0]
];

// last price line
add(plot, 'line', { x1: 0, y1: 345.5, x2: '100%', y2: 345.5, stroke: '#d3dbc4' });

const scene = add(plot, 'g', { transform: 'translate(-47 -128)' });

add(scene, 'text', { x: 616, y: 371, class: 'watermark big' }, 'EURUSD, 30');
add(scene, 'text', { x: 617, y: 414, class: 'watermark small' }, 'Euro/Dólar estadounidense');

// resistance zone
add(scene, 'rect', { x: 131.5, y: 336.5, width: 648, height: 11, fill: '#f5f08a', 'fill-opacity': .6, stroke: '#6c6d3a' });

function drawCandle(x, c, opacity) {
  const [high, top, bottom, low, up] = c;
  const g = add(scene, 'g', { opacity: opacity });
  const cx = Math.round(x) - 0.5;
  add(g, 'line', { x1: cx, y1: high, x2: cx, y2: low, stroke: '#565d4b' });
  if (up) {
    add(g, 'rect', { x: cx - 2, y: top + 0.5, width: 4, height: Math.max(bottom - top - 1, 1), fill: '#4468e0', stroke: '#1b2c86' });
  } else {
    add(g, 'rect', { x: cx - 2.5, y: top, width: 5, height: bottom - top, fill: '#000' });
  }
}

earlier.forEach(c => drawCandle(c[0], c.slice(1), c[0] > 50 && c[1] < 165 ? 0.6 : 1));
candles.forEach((c, i) => drawCandle(156.3 + i * 6.065, c, 1));

// trend line
add(scene, 'line', { x1: 294, y1: 431, x2: 865, y2: 378, stroke: '#4a1aa0', 'stroke-width': 1.4 });

// economic events
const flash = add(scene, 'g', { transform: 'translate(798 600)' });
add(flash, 'circle', { r: 8, fill: '#f7effb', stroke: '#7a1fa8', 'stroke-width': 1.4 });
add(flash, 'path', { d: 'M2-4.500-3.500.500h2.500L-2 4.500 3.500-.500H1z', fill: '#7a1fa8' });
const usa = add(scene, 'g', { transform: 'translate(973.500 600)' });
add(usa, 'circle', { r: 8, fill: '#fff', stroke: '#e0404f', 'stroke-width': 1.6 });
add(usa, 'path', { d: 'M0-3.500H6M0-.500H6.500M-6 2.500H6M-4 5H4', stroke: '#e0404f', 'stroke-width': 1.5 });
add(usa, 'path', { d: 'M0-6V1H-6.500A6.500 6.500 0 0 1 0-6z', fill: '#3f86d8' });

// price scale
for (let i = 0; i < 18; i++) {
  const price = (1.165 - i * 0.001).toFixed(5).replace('.', ',');
  add(plot, 'text', { x: '100%', dx: -9, y: Math.round(26 + i * 26.53), class: 'axis price' }, price);
}

// time scale
const times = [
  [64, '12:00'], [137, '18:00'], [210, '30'], [283, '06:00'], [356, '12:00'], [428, '18:00'],
  [501, '31'], [573, '06:00'], [646, '12:00'], [719, '18:00'], [767, 'Nov'], [852, '06:00'],
  [925, '12:00'], [998, '18:00'], [1070, '4'], [1143, '06:00']
];
times.forEach(([x, label]) => {
  add(scene, 'text', { x: x, y: 626, class: label === 'Nov' ? 'axis time strong' : 'axis time' }, label);
});
```
